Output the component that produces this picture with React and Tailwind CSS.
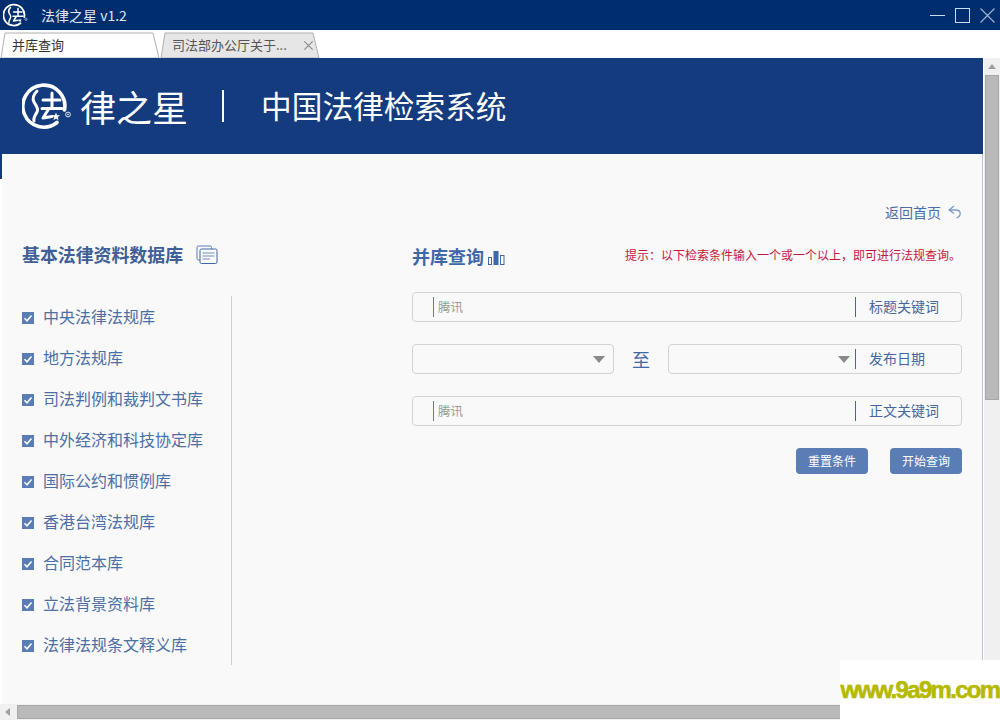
const categories = [
  '中央法律法规库',
  '地方法规库',
  '司法判例和裁判文书库',
  '中外经济和科技协定库',
  '国际公约和惯例库',
  '香港台湾法规库',
  '合同范本库',
  '立法背景资料库',
  '法律法规条文释义库',
];

const LogoMark = ({ className }) => (
  <svg viewBox="7 6 50 48" className={className}>
    <path d="M49.5 34A21 21 0 1 0 42 46.500" fill="none" stroke="#fff" strokeWidth="3.6" strokeLinecap="round" />
    <path d="M22 15c-4 4-5 7-3 11s5 6 3 10-4 6-3 9" fill="none" stroke="#fff" strokeWidth="3" strokeLinecap="round" />
    <path d="M28 24H45M37 17V32M27 32.500H47" fill="none" stroke="#fff" strokeWidth="3" strokeLinecap="round" />
    <path d="M33 34L28 42L37 40.500" fill="none" stroke="#fff" strokeWidth="3" strokeLinecap="round" strokeLinejoin="round" />
    <path d="M41 36.500l1.100 2.800h3l-2.400 1.900 .9 3-2.600-1.700-2.600 1.700 .9-3-2.400-1.900h3z" fill="#fff" />
    <circle cx="53" cy="38.500" r="2.400" fill="none" stroke="#fff" strokeWidth="0.900" />
    <circle cx="53" cy="38.500" r="0.800" fill="#fff" />
  </svg>
);

const CheckBox = () => (
  <span className="mt-[4px] flex h-3 w-3 shrink-0 items-center justify-center bg-[#5b7db5]">
    <svg viewBox="0 0 12 12" className="h-3 w-3">
      <path d="M2.500 6.200l2.500 2.600 4.500-5.300" fill="none" stroke="#fff" strokeWidth="1.500" />
    </svg>
  </span>
);

const Caret = () => (
  <span className="h-0 w-0 border-x-[6px] border-t-[7px] border-x-transparent border-t-[#8a8a8a]" />
);

const FieldLabel = ({ children }) => (
  <span className="flex h-[20px] w-[106px] shrink-0 items-center border-l border-[#3f68a8] pb-[2px] pl-[13px] text-sm leading-none text-[#44689f]">
    {children}
  </span>
);

const TextField = ({ label }) => (
  <div className="flex h-[30px] items-center rounded-[4px] border border-[#d2d2d2] pl-5">
    <span className="h-[20px] w-px bg-[#777]" />
    <span className="ml-1 flex-1 text-[12.500px] leading-none text-[#9a9a9a]">腾讯</span>
    <FieldLabel>{label}</FieldLabel>
  </div>
);

const Tab = ({ active, children, close }) => (
  <div className="relative h-[26px] w-[160px] text-[13px] leading-none">
    <svg viewBox="0 0 160 26" className="absolute inset-0 h-full w-full">
      <path d="M1 26L5 1H153L159 26Z" fill={active ? '#fff' : '#e6e6e6'} stroke="#b0b0b0" />
    </svg>
    <div className={`relative flex h-full items-center pb-[1px] pl-3 ${active ? 'text-[#333]' : 'text-[#555]'}`}>
      {children}
      {close && (
        <svg viewBox="0 0 12 12" className="absolute right-[6px] top-[8px] h-[11px] w-[11px]">
          <path d="M1.500 1.500l9 9M10.500 1.500l-9 9" stroke="#888" strokeWidth="1.200" />
        </svg>
      )}
    </div>
  </div>
);

export default function App() {
  return (
    <div className="relative flex h-[720px] w-[1000px] flex-col overflow-hidden bg-white font-['Noto_Sans_CJK_SC','Noto_Sans',sans-serif]">
      {/* title bar */}
      <div className="flex h-[30px] shrink-0 items-center bg-[#002d6e] pl-[3px] pr-[5px] text-white">
        <LogoMark className="h-[24px] w-[25px]" />
        <span className="ml-[13px] font-['Noto_Sans_CJK_SC','Liberation_Sans',sans-serif] text-sm leading-none text-[#dfe7f3]">法律之星 v1.2</span>
        <div className="ml-auto flex items-center gap-[10px]">
          <span className="h-px w-[15px] bg-[#cfdaea]" />
          <span className="h-[15px] w-[15px] border border-[#cfdaea]" />
          <svg viewBox="0 0 15 15" className="h-[15px] w-[15px]">
            <path d="M0.500 0.500l14 14M14.500 0.500l-14 14" stroke="#9db2d0" strokeWidth="1.200" />
          </svg>
        </div>
      </div>

      {/* tabs */}
      <div className="flex h-[28px] shrink-0 items-end">
        <Tab active>并库查询</Tab>
        <Tab close>司法部办公厅关于...</Tab>
      </div>

      <div className="flex min-h-0 flex-1">
        <div className="flex w-[984px] flex-col">
          {/* banner */}
          <div className="flex h-[96px] w-[983px] shrink-0 items-center bg-[#133b7e] pb-[1px] pl-[22px] text-white">
            <LogoMark className="h-[48px] w-[50px]" />
            <span className="ml-[8px] text-[36px] leading-none">律之星</span>
            <span className="ml-[34px] h-[32px] w-[2px] bg-white" />
            <span className="ml-[37px] text-[30.700px] leading-none">中国法律检索系统</span>
          </div>

          <div className="flex min-h-0 flex-1">
            <div className="w-[2px] shrink-0">
              <div className="h-[25px] bg-[#133b7e]" />
            </div>

            {/* page body */}
            <div className="w-[981px] border-r border-[#b5c3dd] bg-[#f9f9f9] px-[20px] pt-[50px]">
              <div className="flex h-[16px] items-center justify-end gap-[7px] text-sm leading-none text-[#4c6fa5]">
                返回首页
                <svg viewBox="0 0 14 14" className="h-[14px] w-[14px]">
                  <path d="M6 1L1 5L6 8.500M1 5H8C13.500 5 13.500 11 8.500 13" fill="none" stroke="#7f9bc9" strokeWidth="1.300" />
                </svg>
              </div>

              <div className="flex">
                <div className="w-[210px] shrink-0">
                  <div className="mt-[21px] flex h-[28px] items-center text-[17.900px] font-bold leading-none text-[#3f5f96]">
                    基本法律资料数据库
                    <svg viewBox="0 0 22 20" className="ml-[13px] h-[20px] w-[22px]">
                      <path d="M4 15H2.500A1.500 1.500 0 0 1 1 13.500V2.500A1.500 1.500 0 0 1 2.500 1H14a1.500 1.500 0 0 1 1.500 1.500V4" fill="none" stroke="#5b7db5" />
                      <rect x="4" y="4" width="17" height="14.500" rx="1.500" fill="#f9f9f9" stroke="#3f68a8" />
                      <path d="M6.500 8H18.500M6.500 11H18.500M6.500 14H14" stroke="#9db2d0" strokeWidth="1.500" />
                    </svg>
                  </div>
                  <div className="mt-[27px] flex h-[369px] flex-col border-r border-[#cfcfcf]">
                    {categories.map((name) => (
                      <div key={name} className="flex h-[41px] shrink-0 items-center gap-[9px] pb-[1px] text-base leading-none text-[#4c6fa5]">
                        <CheckBox />
                        {name}
                      </div>
                    ))}
                  </div>
                </div>

                <div className="ml-[180px] flex-1">
                  <div className="mt-[21px] flex h-[30px] items-center">
                    <span className="text-lg font-bold leading-none text-[#3f68a8]">并库查询</span>
                    <svg viewBox="0 0 17 14" className="ml-[4px] mt-[3px] h-[14px] w-[17px]">
                      <rect x="0.500" y="6.500" width="3" height="7" fill="none" stroke="#3f68a8" />
                      <rect x="5.500" y="0" width="5" height="14" fill="#3f68a8" />
                      <rect x="12.500" y="4.500" width="3.500" height="9" fill="none" stroke="#3f68a8" />
                    </svg>
                    <span className="ml-auto mr-[1px] mt-[-2px] text-xs leading-none text-[#c4173f]">
                      提示：以下检索条件输入一个或一个以上，即可进行法规查询。
                    </span>
                  </div>

                  <div className="mt-[21px] flex flex-col gap-[22px]">
                    <TextField label="标题关键词" />
                    <div className="flex items-center">
                      <div className="flex h-[30px] w-[202px] items-center justify-end rounded-[4px] border border-[#d2d2d2] pr-[8px]">
                        <Caret />
                      </div>
                      <span className="w-[54px] text-center text-lg leading-none text-[#3f68a8]">至</span>
                      <div className="flex h-[30px] flex-1 items-center rounded-[4px] border border-[#d2d2d2]">
                        <span className="ml-auto mr-[5px] flex"><Caret /></span>
                        <FieldLabel>发布日期</FieldLabel>
                      </div>
                    </div>
                    <TextField label="正文关键词" />
                  </div>

                  <div className="mt-[22px] flex justify-end gap-[22px]">
                    <button className="h-[26px] w-[72px] rounded-[4px] bg-[#5b7db5] text-xs leading-none text-white">重置条件</button>
                    <button className="h-[26px] w-[72px] rounded-[4px] bg-[#5b7db5] text-xs leading-none text-white">开始查询</button>
                  </div>
                </div>
              </div>
            </div>
          </div>
        </div>

        {/* vertical scrollbar */}
        <div className="flex w-[16px] flex-col items-center bg-[#f0f0f0] pt-[6px]">
          <span className="h-0 w-0 border-x-[4px] border-b-[5px] border-x-transparent border-b-[#a0a0a0]" />
          <span className="mt-[6px] h-[325px] w-[14px] border border-[#a6a6a6] bg-[#b9b9b9]" />
        </div>
      </div>

      {/* horizontal scrollbar */}
      <div className="flex h-[16px] shrink-0 items-center bg-[#f0f0f0] pl-[5px]">
        <span className="h-0 w-0 border-y-[4px] border-r-[5px] border-y-transparent border-r-[#a0a0a0]" />
        <span className="ml-[7px] h-[14px] w-[900px] border border-[#a6a6a6] bg-[#b9b9b9]" />
      </div>

      {/* watermark */}
      <div className="absolute bottom-0 right-0 flex h-[60px] w-[160px] items-center justify-center bg-white font-['Liberation_Sans',sans-serif] text-[24px] font-bold leading-none tracking-[-1.700px] text-[#b5b900] [-webkit-text-stroke:0.6px_#b5b900]">
        www.9a9m.com
      </div>
    </div>
  );
}
